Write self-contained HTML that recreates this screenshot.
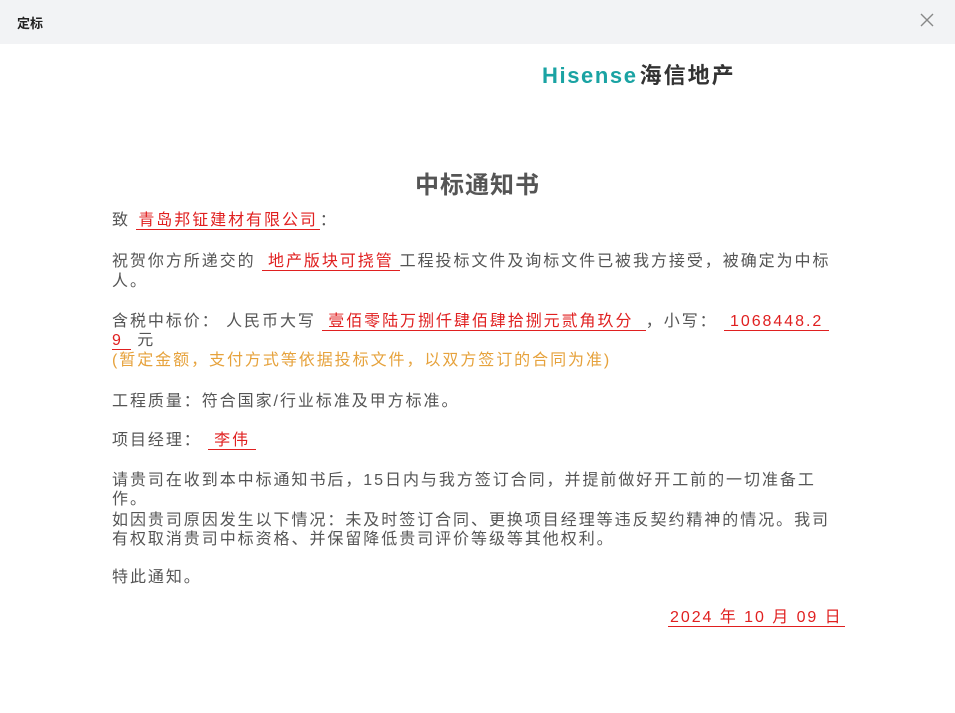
<!DOCTYPE html>
<html><head><meta charset="utf-8"><style>
*{margin:0;padding:0;box-sizing:border-box}
body{width:955px;height:713px;background:#fff;font-family:"Liberation Sans","Noto Sans CJK SC",sans-serif;position:relative;overflow:hidden;color:#555}
.hdr{position:absolute;left:0;top:0;width:955px;height:44px;background:#f2f3f5}
.hdr .t{position:absolute;left:17px;top:13px;font-size:13px;color:#222;font-weight:bold}
.hdr .x{position:absolute;left:919px;top:12px}
.l{position:absolute;left:112px;font-size:16px;letter-spacing:1.95px;white-space:nowrap;line-height:20px}
.u{color:#e02020;border-bottom:1px solid #e02020;padding:0 6px}
.o{color:#e6a23c}
</style></head><body>
<div class="hdr"><div class="t">定标</div>
<svg class="x" width="16" height="16" viewBox="0 0 16 16"><path d="M2 2L14 14M14 2L2 14" stroke="#888" stroke-width="1.4"/></svg></div>
<div style="position:absolute;left:542px;top:64px;font-size:22px;font-weight:bold;color:#1aa3a3;line-height:24px;white-space:nowrap"><span style="letter-spacing:1.6px">Hisense</span><span style="color:#333;font-size:22px;margin-left:2px;letter-spacing:2px">海信地产</span></div>
<div style="position:absolute;left:0;width:955px;top:165px;text-align:center;font-size:24px;font-weight:bold;color:#555;letter-spacing:1px">中标通知书</div>
<div class="l" style="top:211px">致 <span class="u" style="padding:0 2px">青岛邦钲建材有限公司</span>：</div>
<div class="l" style="top:252px">祝贺你方所递交的 <span class="u">地产版块可挠管</span>工程投标文件及询标文件已被我方接受，被确定为中标</div>
<div class="l" style="top:272px">人。</div>
<div class="l" style="top:312px">含税中标价： 人民币大写 <span class="u">壹佰零陆万捌仟肆佰肆拾捌元贰角玖分 </span> ，小写： <span class="u">1068448.2</span></div>
<div class="l" style="top:331px"><span class="u" style="padding:0 8px 0 0">9</span> 元</div>
<div class="l o" style="top:351px">(暂定金额，支付方式等依据投标文件，以双方签订的合同为准)</div>
<div class="l" style="top:392px">工程质量：符合国家/行业标准及甲方标准。</div>
<div class="l" style="top:431px">项目经理： <span class="u">李伟</span></div>
<div class="l" style="top:471px">请贵司在收到本中标通知书后，15日内与我方签订合同，并提前做好开工前的一切准备工</div>
<div class="l" style="top:490px">作。</div>
<div class="l" style="top:511px">如因贵司原因发生以下情况：未及时签订合同、更换项目经理等违反契约精神的情况。我司</div>
<div class="l" style="top:530px">有权取消贵司中标资格、并保留降低贵司评价等级等其他权利。</div>
<div class="l" style="top:568px">特此通知。</div>
<div class="l" style="top:608px;left:668px"><span class="u" style="padding:0 2px">2024 年 10 月 09 日</span></div>
</body></html>
